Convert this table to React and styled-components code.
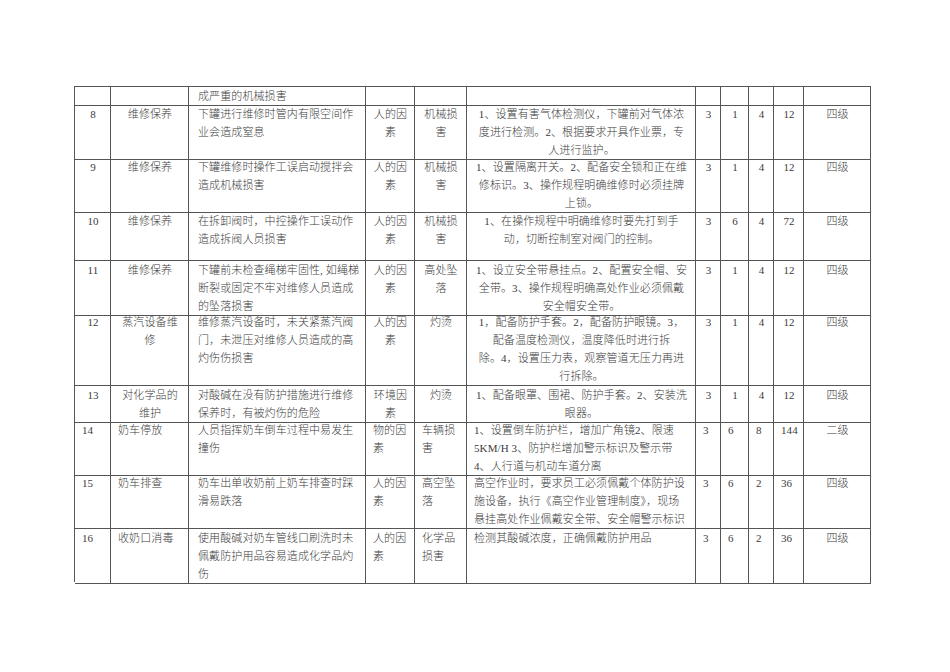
import React from 'react';
import styled, { createGlobalStyle } from 'styled-components';

const GlobalStyle = createGlobalStyle`
  html, body {
    margin: 0;
    padding: 0;
    background: #ffffff;
  }
  body {
    font-family: "Liberation Serif", "Noto Sans CJK SC", serif;
    color: #3c3c3c;
  }
`;

const COLS = [36, 78, 177, 49, 52, 229, 25, 28, 25, 30, 67];

const Page = styled.div`
  width: 950px;
  height: 672px;
  padding: 86px 0 0 74px;
  box-sizing: border-box;
`;

const Table = styled.div`
  width: 797px;
  border-left: 1px solid #555;
  border-top: 1px solid #555;
  box-sizing: border-box;
`;

const Row = styled.div`
  display: grid;
  grid-template-columns: ${COLS.map((c) => c + 'px').join(' ')};
  height: ${(p) => p.$h}px;
`;

const Cell = styled.div`
  box-sizing: border-box;
  border-right: 1px solid #555;
  border-bottom: 1px solid #555;
  padding: 0 ${(p) => (p.$wide ? 8 : 6)}px 0 ${(p) => (p.$wide ? 9 : 7)}px;
  font-size: 11px;
  font-weight: 300;
  line-height: 18px;
  letter-spacing: 0.1px;
  text-align: ${(p) => p.$align};
  white-space: pre;
  overflow: visible;
  position: relative;
  z-index: 1;
`;

const CENTER = ['center', 'center', 'left', 'center', 'center', 'center', 'center', 'center', 'center', 'center', 'center'];
const LEFT = ['left', 'left', 'left', 'left', 'left', 'left', 'left', 'left', 'left', 'left', 'center'];

const rows = [
  { h: 18, left: false, cells: ['', '', '成严重的机械损害', '', '', '', '', '', '', '', ''] },
  {
    h: 53,
    left: false,
    cells: [
      '8', '维修保养', '下罐进行维修时管内有限空间作\n业会造成窒息', '人的因\n素', '机械损\n害',
      '1、设置有害气体检测仪，下罐前对气体浓\n度进行检测。2、根据要求开具作业票，专\n人进行监护。',
      '3', '1', '4', '12', '四级',
    ],
  },
  {
    h: 54,
    left: false,
    cells: [
      '9', '维修保养', '下罐维修时操作工误启动搅拌会\n造成机械损害', '人的因\n素', '机械损\n害',
      '1、设置隔离开关。2、配备安全锁和正在维\n修标识。3、操作规程明确维修时必须挂牌\n上锁。',
      '3', '1', '4', '12', '四级',
    ],
  },
  {
    h: 49,
    left: false,
    cells: [
      '10', '维修保养', '在拆卸阀时，中控操作工误动作\n造成拆阀人员损害', '人的因\n素', '机械损\n害',
      '1、在操作规程中明确维修时要先打到手\n动，切断控制室对阀门的控制。',
      '3', '6', '4', '72', '四级',
    ],
  },
  {
    h: 52,
    left: false,
    cells: [
      '11', '维修保养', '下罐前未检查绳梯牢固性, 如绳梯\n断裂或固定不牢对维修人员造成\n的坠落损害', '人的因\n素', '高处坠\n落',
      '1、设立安全带悬挂点。2、配置安全帽、安\n全带。3、操作规程明确高处作业必须佩戴\n安全帽安全带。',
      '3', '1', '4', '12', '四级',
    ],
  },
  {
    h: 73,
    left: false,
    cells: [
      '12', '蒸汽设备维\n修', '维修蒸汽设备时，未关紧蒸汽阀\n门，未泄压对维修人员造成的高\n灼伤伤损害', '人的因\n素', '灼烫',
      '1，配备防护手套。2，配备防护眼镜。3，\n配备温度检测仪，温度降低时进行拆\n除。4，设置压力表，观察管道无压力再进\n行拆除。',
      '3', '1', '4', '12', '四级',
    ],
  },
  {
    h: 35,
    left: false,
    cells: [
      '13', '对化学品的\n维护', '对酸碱在没有防护措施进行维修\n保养时，有被灼伤的危险', '环境因\n素', '灼烫',
      '1、配备眼罩、围裙、防护手套。2、安装洗\n眼器。',
      '3', '1', '4', '12', '四级',
    ],
  },
  {
    h: 53,
    left: true,
    cells: [
      '14', '奶车停放', '人员指挥奶车倒车过程中易发生\n撞伤', '物的因\n素', '车辆损\n害',
      '1、设置倒车防护栏，增加广角镜2、限速\n5KM/H 3、防护栏增加警示标识及警示带\n4、人行道与机动车道分离',
      '3', '6', '8', '144', '二级',
    ],
  },
  {
    h: 55,
    left: true,
    cells: [
      '15', '奶车排查', '奶车出单收奶前上奶车排查时踩\n滑易跌落', '人的因\n素', '高空坠\n落',
      '高空作业时，要求员工必须佩戴个体防护设\n施设备，执行《高空作业管理制度》，现场\n悬挂高处作业佩戴安全带、安全帽警示标识',
      '3', '6', '2', '36', '四级',
    ],
  },
  {
    h: 53,
    left: true,
    cells: [
      '16', '收奶口消毒', '使用酸碱对奶车管线口刷洗时未\n佩戴防护用品容易造成化学品灼\n伤', '人的因\n素', '化学品\n损害',
      '检测其酸碱浓度，正确佩戴防护用品',
      '3', '6', '2', '36', '四级',
    ],
  },
];

export default function App() {
  return (
    <Page>
      <GlobalStyle />
      <Table>
        {rows.map((row, ri) => {
          const align = row.left ? LEFT : CENTER;
          return (
            <Row key={'row_' + ri} $h={row.h}>
              {row.cells.map((text, ci) => (
                <Cell key={'cell_' + ci} $align={align[ci]} $wide={ci === 2}>
                  {text}
                </Cell>
              ))}
            </Row>
          );
        })}
      </Table>
    </Page>
  );
}
